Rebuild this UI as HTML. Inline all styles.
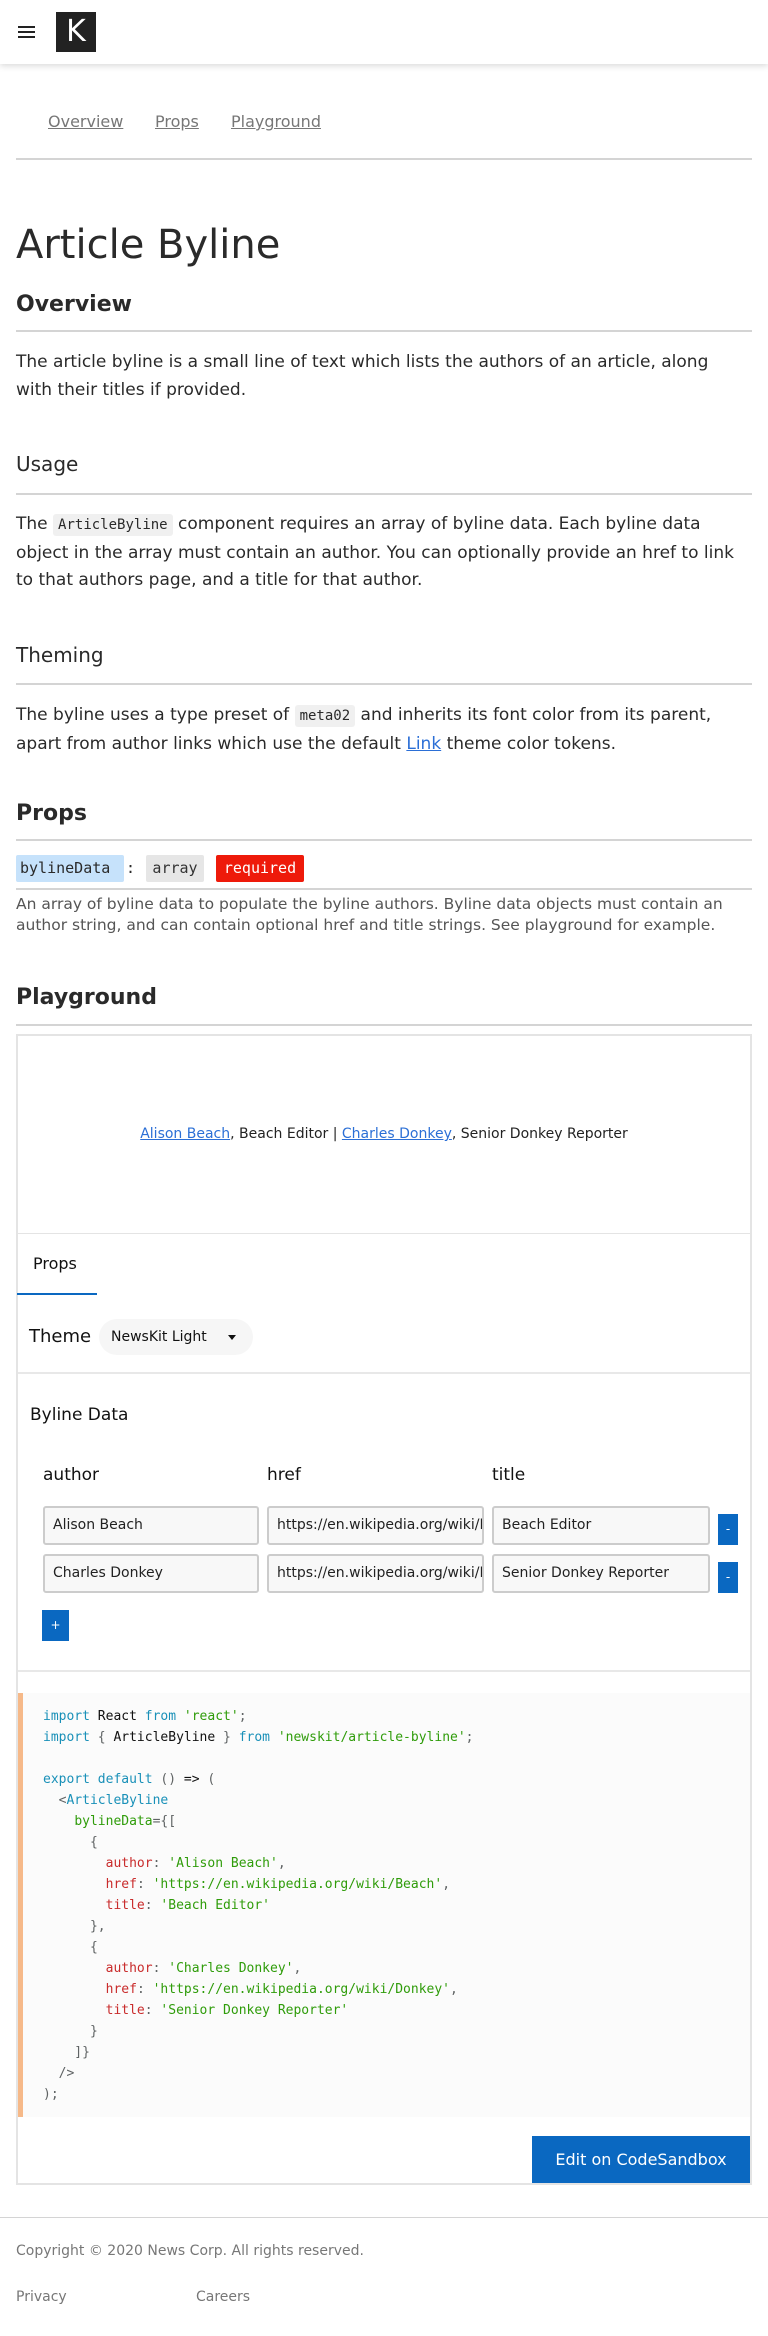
<!DOCTYPE html>
<html><head><meta charset="utf-8"><style>
*{margin:0;padding:0;box-sizing:border-box}
body{width:768px;height:2336px;position:relative;background:#fff;font-family:"DejaVu Sans","Liberation Sans",sans-serif;color:#2a2a2a;overflow:hidden}
.a{position:absolute;white-space:nowrap}
.hr{position:absolute;left:16px;width:736px;height:2px;background:#d4d4d4}
p.a{white-space:normal;width:728px;left:16px;font-size:17px;line-height:27.5px;color:#2a2a2a}
code{font-family:"DejaVu Sans Mono","Liberation Mono",monospace;background:#f0f0f0;border-radius:3px;padding:3px 5px;font-size:14px}
h2{position:absolute;left:16px;font-size:22px;font-weight:bold;line-height:30px}
h3{position:absolute;left:16px;font-size:20px;font-weight:normal;line-height:30px}
.mono{font-family:"DejaVu Sans Mono","Liberation Mono",monospace}
.inp{position:absolute;height:39px;border:2px solid #ccc;border-radius:3px;background:#f8f8f8;font-size:14px;padding:0 8px;line-height:35px;overflow:hidden;white-space:nowrap;color:#222}
.btn{position:absolute;background:#0a68c1;color:#fff;font-size:12px;text-align:center}
pre{font-family:"DejaVu Sans Mono","Liberation Mono",monospace;font-size:13px;line-height:21px;color:#5f6364;white-space:pre !important}
.k{color:#1990b8}.s{color:#2f9c0a}.p{color:#c92c2c}.t{color:#111}
</style></head><body>
<div class="a" style="left:0;top:0;width:768px;height:64px;box-shadow:0 2px 6px rgba(0,0,0,.15);background:#fff"></div>
<div class="a" style="left:18px;top:26px;width:17px;height:2px;background:#222;box-shadow:0 5px 0 #222,0 10px 0 #222"></div>
<div class="a" style="left:56px;top:12px;width:40px;height:40px;background:#222;color:#fff;font-size:30px;line-height:40px;text-align:center">K</div>

<div class="a" style="left:48px;top:112px;font-size:16px;color:#777;text-decoration:underline">Overview</div>
<div class="a" style="left:155px;top:112px;font-size:16px;color:#777;text-decoration:underline">Props</div>
<div class="a" style="left:231px;top:112px;font-size:16px;color:#777;text-decoration:underline">Playground</div>
<div class="hr" style="top:158px"></div>

<div class="a" style="left:16px;top:220px;font-size:40px;line-height:50px">Article Byline</div>
<h2 style="top:290px">Overview</h2>
<div class="hr" style="top:330px"></div>
<p class="a" style="top:349px">The article byline is a small line of text which lists the authors of an article, along with their titles if provided.</p>

<h3 style="top:449px">Usage</h3>
<div class="hr" style="top:493px"></div>
<p class="a" style="top:511px">The <code>ArticleByline</code> component requires an array of byline data. Each byline data object in the array must contain an author. You can optionally provide an href to link to that authors page, and a title for that author.</p>

<h3 style="top:640px">Theming</h3>
<div class="hr" style="top:683px"></div>
<p class="a" style="top:702px">The byline uses a type preset of <code>meta02</code> and inherits its font color from its parent, apart from author links which use the default <span style="color:#2b6fd6;text-decoration:underline">Link</span> theme color tokens.</p>

<h2 style="top:799px">Props</h2>
<div class="hr" style="top:839px"></div>
<div class="a mono" style="left:16px;top:855px;width:108px;height:27px;background:#c6e2fb;border-radius:2px;font-size:15px;line-height:27px;padding-left:4px">bylineData</div>
<div class="a mono" style="left:126px;top:855px;font-size:15px;line-height:27px">:</div>
<div class="a mono" style="left:146px;top:855px;width:58px;height:27px;background:#e6e6e6;border-radius:2px;font-size:15px;line-height:27px;text-align:center;color:#333">array</div>
<div class="a mono" style="left:216px;top:855px;width:88px;height:27px;background:#ee1a0a;border-radius:2px;font-size:15px;line-height:27px;text-align:center;color:#fff">required</div>
<div class="hr" style="top:888px"></div>
<p class="a" style="top:894px;width:740px;font-size:15.5px;line-height:21px;color:#555">An array of byline data to populate the byline authors. Byline data objects must contain an author string, and can contain optional href and title strings. See playground for example.</p>

<h2 style="top:983px">Playground</h2>
<div class="hr" style="top:1024px"></div>

<div class="a" style="left:16px;top:1034px;width:736px;height:1151px;border:2px solid #e4e4e4"></div>
<div class="a" style="left:18px;top:1124px;width:732px;text-align:center;font-size:14px;line-height:20px;color:#222"><span style="color:#2b6fd6;text-decoration:underline">Alison Beach</span>, Beach Editor | <span style="color:#2b6fd6;text-decoration:underline">Charles Donkey</span>, Senior Donkey Reporter</div>
<div class="a" style="left:18px;top:1233px;width:732px;height:1px;background:#e4e4e4"></div>
<div class="a" style="left:33px;top:1254px;font-size:16px;color:#111">Props</div>
<div class="a" style="left:17px;top:1293px;width:80px;height:2px;background:#0a68c1"></div>
<div class="a" style="left:29px;top:1326px;font-size:18px;color:#111">Theme</div>
<div class="a" style="left:99px;top:1319px;width:154px;height:36px;background:#f6f6f6;border-radius:18px;font-size:14px;line-height:36px;padding-left:12px;color:#111">NewsKit Light<span style="position:absolute;left:129px;top:16px;border:4px solid transparent;border-top:5px solid #111"></span></div>
<div class="a" style="left:18px;top:1372px;width:732px;height:2px;background:#e8e8e8"></div>
<div class="a" style="left:30px;top:1405px;font-size:17px;color:#111">Byline Data</div>
<div class="a" style="left:43px;top:1465px;font-size:17px;color:#111">author</div>
<div class="a" style="left:267px;top:1465px;font-size:17px;color:#111">href</div>
<div class="a" style="left:492px;top:1465px;font-size:17px;color:#111">title</div>
<div class="inp" style="left:43px;top:1506px;width:216px">Alison Beach</div>
<div class="inp" style="left:267px;top:1506px;width:217px">https://en.wikipedia.org/wiki/Beach</div>
<div class="inp" style="left:492px;top:1506px;width:218px">Beach Editor</div>
<div class="btn" style="left:718px;top:1514px;width:20px;height:31px;line-height:31px">-</div>
<div class="inp" style="left:43px;top:1554px;width:216px">Charles Donkey</div>
<div class="inp" style="left:267px;top:1554px;width:217px">https://en.wikipedia.org/wiki/Donkey</div>
<div class="inp" style="left:492px;top:1554px;width:218px">Senior Donkey Reporter</div>
<div class="btn" style="left:718px;top:1562px;width:20px;height:31px;line-height:31px">-</div>
<div class="btn" style="left:42px;top:1610px;width:27px;height:31px;line-height:31px">+</div>
<div class="a" style="left:18px;top:1670px;width:732px;height:2px;background:#e8e8e8"></div>

<div class="a" style="left:18px;top:1693px;width:732px;height:424px;background:#fbfbfb;border-left:5px solid #f6b989"></div>
<pre class="a" style="left:43px;top:1706px"><span class="k">import</span> <span class="t">React</span> <span class="k">from</span> <span class="s">'react'</span>;
<span class="k">import</span> { <span class="t">ArticleByline</span> } <span class="k">from</span> <span class="s">'newskit/article-byline'</span>;

<span class="k">export</span> <span class="k">default</span> () <span class="t">=&gt;</span> (
  &lt;<span class="k">ArticleByline</span>
    <span class="s">bylineData</span>={[
      {
        <span class="p">author</span>: <span class="s">'Alison Beach'</span>,
        <span class="p">href</span>: <span class="s">'https://en.wikipedia.org/wiki/Beach'</span>,
        <span class="p">title</span>: <span class="s">'Beach Editor'</span>
      },
      {
        <span class="p">author</span>: <span class="s">'Charles Donkey'</span>,
        <span class="p">href</span>: <span class="s">'https://en.wikipedia.org/wiki/Donkey'</span>,
        <span class="p">title</span>: <span class="s">'Senior Donkey Reporter'</span>
      }
    ]}
  /&gt;
);</pre>
<div class="btn" style="left:532px;top:2136px;width:218px;height:47px;line-height:47px;font-size:16px">Edit on CodeSandbox</div>

<div class="a" style="left:0;top:2217px;width:768px;height:1px;background:#d4d4d4"></div>
<div class="a" style="left:16px;top:2243px;font-size:14px;color:#777">Copyright © 2020 News Corp. All rights reserved.</div>
<div class="a" style="left:16px;top:2289px;font-size:14px;color:#777">Privacy</div>
<div class="a" style="left:196px;top:2289px;font-size:14px;color:#777">Careers</div>
</body></html>
